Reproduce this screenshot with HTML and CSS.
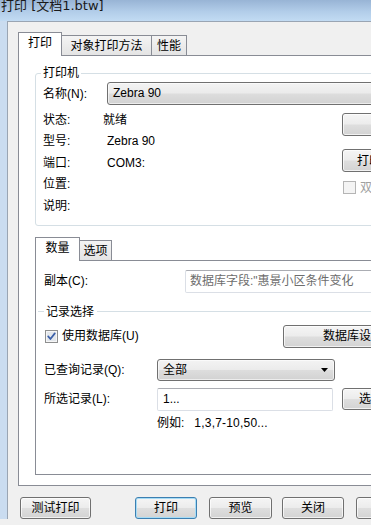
FILE: index.html
```html
<!DOCTYPE html>
<html lang="zh-CN">
<head>
<meta charset="utf-8">
<title>打印</title>
<link rel="stylesheet" href="styles.css">
</head>
<body>
<div class="window">
  <div class="titlebar"><span class="title">打印 [文档1.btw]</span></div>
  <div class="frame">
    <div class="frame-edge"></div>
    <div class="client">
      <div class="tabs">
        <div class="tab active t-print">打印</div>
        <div class="tab t-method">对象打印方法</div>
        <div class="tab t-perf">性能</div>
      </div>
      <div class="pane outer">
        <fieldset class="group">
          <legend class="legend">打印机</legend>
          <div class="name-row">
            <span class="name-lbl">名称(N):</span>
            <div class="combo combo-wide">Zebra 90</div>
          </div>
          <div class="info">
            <div class="info-grid">
              <span>状态:</span><span class="status-val">就绪</span>
              <span>型号:</span><span>Zebra 90</span>
              <span>端口:</span><span>COM3:</span>
              <span>位置:</span><span></span>
              <span>说明:</span><span></span>
            </div>
            <div class="side">
              <button class="btn b-prop">属性</button>
              <button class="btn b-pref">打印首选项...</button>
              <div class="chk disabled"><span class="box-off"></span><span>双面打印</span></div>
            </div>
          </div>
        </fieldset>

        <div class="tabs inner-tabs">
          <div class="tab active t-qty">数量</div>
          <div class="tab t-opt">选项</div>
        </div>
        <div class="pane inner">
          <div class="row r-copies">
            <span class="lbl-copies">副本(C):</span>
            <div class="textbox tb-copies">数据库字段:"惠景小区条件变化</div>
          </div>
          <div class="sep"><span class="sep-line short"></span><span class="sep-text">记录选择</span><span class="sep-line"></span></div>
          <div class="row r-db">
            <div class="chk chk-db">
              <svg class="checkbox" width="13" height="13" viewBox="0 0 13 13">
                <rect x="0.5" y="0.5" width="12" height="12" fill="#f6f6f6" stroke="#8e8f8f"/>
                <rect x="2" y="2" width="9" height="9" fill="#e3e7ec"/>
                <path d="M3.2 6.4 L5.4 9 L9.8 3.4" stroke="#3b5fa8" stroke-width="1.7" fill="none" stroke-linecap="round" stroke-linejoin="round"/>
              </svg>
              <span>使用数据库(U)</span>
            </div>
            <button class="btn b-dbset">数据库设置...</button>
          </div>
          <div class="row r-query">
            <span class="lbl-rec">已查询记录(Q):</span>
            <div class="combo combo-all">
              <span>全部</span>
              <svg width="7" height="4" viewBox="0 0 7 4"><path d="M0 0 H7 L3.5 4 Z" fill="#000"/></svg>
            </div>
          </div>
          <div class="row r-sel">
            <span class="lbl-rec">所选记录(L):</span>
            <div class="textbox tb-sel">1...</div>
            <button class="btn b-choose">选择...</button>
          </div>
          <div class="example"><span>例如:</span><span class="ex-val">1,3,7-10,50...</span></div>
        </div>
      </div>

      <div class="buttons">
        <button class="btn b-test">测试打印</button>
        <button class="btn default b-print">打印</button>
        <button class="btn b-preview">预览</button>
        <button class="btn b-close">关闭</button>
        <button class="btn b-help">帮助</button>
      </div>
    </div>
  </div>
</div>
</body>
</html>
```
FILE: styles.css
```css
* { box-sizing: border-box; }
html, body { margin: 0; padding: 0; }
body {
  width: 371px;
  height: 525px;
  overflow: hidden;
  background: #f0f0f0;
  font: 12px/16px "Liberation Sans", "Noto Sans CJK SC", sans-serif;
  color: #000;
}
.window { width: 480px; }

.titlebar {
  height: 21px;
  background: linear-gradient(to bottom, #98b4d5 0%, #b2cde9 55%, #c2dbf3 100%);
  padding-left: 1px;
}
.title {
  font: 13px/11px "DejaVu Sans", "Noto Sans CJK SC", sans-serif;
  color: #1a1a1a;
  display: block;
}

.frame { display: flex; }
.frame-edge {
  width: 8px;
  flex: none;
  background: #cadcf0;
  border-right: 1px solid #9aa5b3;
}
.client {
  flex: 1;
  border-top: 1px solid #9aa5b3;
  padding: 10px 0 0 10px;
  background: #f0f0f0;
}

/* tabs */
.tabs {
  display: flex;
  align-items: flex-end;
  height: 23px;
}
.tab {
  height: 20px;
  border: 1px solid #898c95;
  border-bottom: none;
  border-left: none;
  background: linear-gradient(to bottom, #f4f4f4, #e4e4e4);
  text-align: center;
  padding-top: 2px;
  line-height: 16px;
  white-space: nowrap;
}
.tab.active {
  height: 24px;
  margin-bottom: -1px;
  background: #fff;
  border-left: 1px solid #898c95;
  padding-top: 2px;
  position: relative;
  z-index: 1;
}
.t-print { width: 44px; }
.t-method { width: 90px; }
.t-perf { width: 35px; }
.t-qty { width: 45px; }
.t-opt { width: 32px; }

.pane {
  border: 1px solid #898c95;
  background: #fff;
}
.outer {
  width: 450px;
  padding: 9px 16px 10px 16px;
}

/* printer group */
.group {
  margin: 0;
  padding: 0 8px 8px 7px;
  border: 1px solid #d5dfe5;
  border-radius: 3px;
  min-width: 0;
}
.legend {
  padding: 0 2px;
  margin-left: -2px;
  line-height: 16px;
}
.name-row {
  display: flex;
  align-items: center;
  height: 23px;
  margin-top: 1px;
}
.name-lbl { width: 64px; flex: none; }

.combo {
  height: 23px;
  border: 1px solid #707070;
  border-radius: 3px;
  background: linear-gradient(to bottom, #f3f3f3 0%, #ebebeb 48%, #dddddd 52%, #d2d2d2 100%);
  box-shadow: inset 0 0 0 1px rgba(255,255,255,0.6);
  padding-left: 5px;
  line-height: 21px;
}
.combo-wide { flex: 1; }

.info { display: flex; }
.info-grid {
  width: 299px;
  flex: none;
  display: grid;
  grid-template-columns: 64px 1fr;
  grid-auto-rows: 21.5px;
  align-items: center;
  padding-top: 4px;
}
.status-val { margin-left: -4px; }
.side {
  flex: 1;
  display: flex;
  flex-direction: column;
  align-items: flex-start;
}

.btn {
  height: 23px;
  border: 1px solid #707070;
  border-radius: 3px;
  background: linear-gradient(to bottom, #f5f5f5 0%, #ececec 48%, #dedede 52%, #d3d3d3 100%);
  box-shadow: inset 0 0 0 1px rgba(255,255,255,0.7);
  font: 12px/16px "Liberation Sans", "Noto Sans CJK SC", sans-serif;
  color: #000;
  padding: 0;
  text-align: center;
  white-space: nowrap;
  flex: none;
}
.btn.default {
  border-color: #3c7fb1;
  box-shadow: inset 0 0 0 1px #a6dcf6;
}
.b-prop { width: 100px; margin-top: 8px; }
.b-pref { width: 100px; margin-top: 13px; }

.chk {
  display: flex;
  align-items: center;
  white-space: nowrap;
}
.chk.disabled { color: #a0a0a0; margin-top: 9px; margin-left: 1px; height: 13px; }
.box-off {
  width: 13px;
  height: 13px;
  border: 1px solid #b5b5b5;
  background: #f4f4f4;
  margin-right: 4px;
  flex: none;
}

/* inner tabs */
.inner-tabs { margin-top: 11px; }
.inner {
  height: 215px;
  padding: 9px 8px 0 8px;
}
.row { display: flex; align-items: center; }
.r-copies { height: 23px; }
.lbl-copies { width: 141px; flex: none; }
.textbox {
  height: 23px;
  border: 1px solid #dbdfe6;
  border-top-color: #abadb3;
  border-radius: 2px;
  background: #fff;
  padding-left: 4px;
  line-height: 21px;
  white-space: nowrap;
  overflow: hidden;
}
.tb-copies { flex: 1; color: #6d6d6d; padding-left: 4px; }

.sep {
  display: flex;
  align-items: center;
  height: 16px;
  margin-top: 11px;
  margin-left: -6px;
}
.sep-line { flex: 1; height: 1px; background: #d5dfe5; }
.sep-line.short { flex: none; width: 6px; }
.sep-text { padding: 0 3px 0 2px; }

.r-db { height: 23px; margin-top: 5px; }
.chk-db { width: 239px; flex: none; padding-left: 1px; }
.checkbox { flex: none; margin-right: 4px; }
.b-dbset { width: 150px; }

.r-query { height: 22px; margin-top: 11px; }
.lbl-rec { width: 113px; flex: none; }
.combo-all {
  width: 178px;
  height: 22px;
  line-height: 20px;
  display: flex;
  align-items: center;
  justify-content: space-between;
  padding: 0 6px 0 5px;
}

.r-sel { height: 23px; margin-top: 7px; }
.tb-sel { width: 176px; padding-left: 5px; }
.b-choose { width: 68px; height: 22px; margin-left: 9px; }

.example {
  margin-top: 4px;
  padding-left: 113px;
  height: 16px;
  display: flex;
  align-items: center;
}
.ex-val { margin-left: 10px; font-size: 12px; letter-spacing: 0.2px; }

/* bottom buttons */
.buttons {
  display: flex;
  margin-top: 11px;
  padding-left: 2px;
}
.buttons .btn { height: 22px; }
.b-test { width: 71px; }
.b-print { width: 62px; margin-left: 44px; }
.b-preview { width: 63px; margin-left: 12px; }
.b-close { width: 62px; margin-left: 10px; }
.b-help { width: 75px; margin-left: 12px; }
```
